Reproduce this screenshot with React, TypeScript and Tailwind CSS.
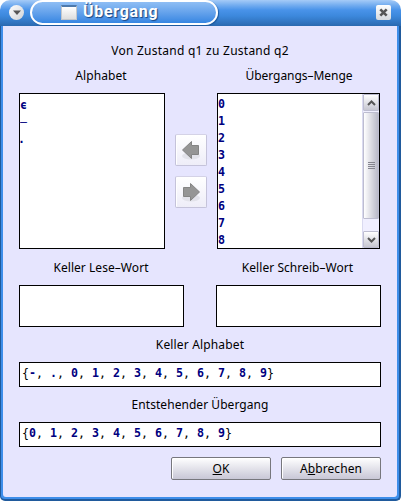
import React, { Fragment } from "react";

const digits = ["0", "1", "2", "3", "4", "5", "6", "7", "8", "9"];

function Label({ children, className = "" }: { children: React.ReactNode; className?: string }) {
  return <div className={`flex h-4 items-center justify-center whitespace-nowrap ${className}`}>{children}</div>;
}

function SetField({ items }: { items: string[] }) {
  return (
    <div className="flex h-[25px] w-[362px] items-center whitespace-pre border border-black bg-white pb-[3px] pl-[2px] font-['DejaVu_Sans_Mono',monospace] text-[11.63px]">
      <span>{"{"}</span>
      {items.map((item, i) => (
        <Fragment key={item}>
          <b className="text-[#000080]">{item}</b>
          <span>{i < items.length - 1 ? ", " : "}"}</span>
        </Fragment>
      ))}
    </div>
  );
}

function SymbolList({ items, narrow = false }: { items: string[]; narrow?: boolean }) {
  return (
    <div className={`min-w-0 flex-1 font-['DejaVu_Sans_Mono',monospace] text-[11.63px] font-bold leading-[17px] text-[#000080] ${narrow ? "pt-[3px]" : "overflow-hidden pt-[2px]"}`}>
      {items.map((item) => (
        <div key={item} className={`h-[17px] ${item === "." ? "-ml-[2px]" : item === "–" ? "font-normal" : ""}`}>{item}</div>
      ))}
    </div>
  );
}

function ArrowButton({ right = false }: { right?: boolean }) {
  return (
    <button className="flex size-8 items-center justify-center rounded-[2px] border border-[#c5c3da] border-t-[#d4d2e6] bg-linear-to-b from-white to-[#eeedf8] shadow-[inset_1px_1px_0_#fff]">
      <svg width="20" height="20" viewBox="0 0 20 20" className={right ? "-scale-x-100" : ""}>
        <ellipse cx="10" cy="16" rx="9" ry="3.5" fill="#e2e2ea" />
        <path d="M1.5 10 L10.5 1.5 V5.5 H17.5 V14.5 H10.5 V18.5 Z" fill="#959595" stroke="#848484" />
      </svg>
    </button>
  );
}

function ScrollButton({ down = false }: { down?: boolean }) {
  return (
    <div className="flex h-[17px] items-center justify-center rounded-[1px] border border-[#bdbdd0] bg-linear-to-b from-white to-[#c6c6d0]">
      <svg width="9" height="6" viewBox="0 0 9 6" className={down ? "-scale-y-100" : ""}>
        <path d="M1 5 L4.5 1.5 L8 5" fill="none" stroke="#555" strokeWidth="2" />
      </svg>
    </div>
  );
}

function Scrollbar() {
  return (
    <div className="flex w-[17px] flex-col border-l border-[#dadaf0] bg-[#f0efff]">
      <ScrollButton />
      <div className="mt-px flex h-[107px] flex-col items-center justify-center gap-px rounded-[1px] border border-[#bdbdd0] bg-linear-to-r from-white to-[#b9b9c8] pb-[1px]">
        {[0, 1, 2, 3].map((n) => (
          <div key={n} className="h-px w-[7px] bg-[#85858f]" />
        ))}
      </div>
      <div className="h-[12px]" />
      <ScrollButton down />
    </div>
  );
}

function DialogButton({ children }: { children: React.ReactNode }) {
  return (
    <button className="flex h-[23px] w-[100px] items-center justify-center rounded-[2px] border border-[#77777d] bg-linear-to-b from-white to-[#c8c7d6] shadow-[inset_1px_1px_0_#fff]">
      {children}
    </button>
  );
}

function TitleBar() {
  return (
    <div className="flex h-[26px] rounded-t-[10px] bg-[linear-gradient(#a5cbf7_0px,#75aef0_5px,#4993e9_10px,#3c88dc_16px,#2a69b0_26px)] pl-[9px] pr-[10px]">
      <div className="mt-[5px] flex size-[15px] items-center justify-center rounded-full bg-linear-to-br from-white to-[#cfd2d6]">
        <svg width="8" height="5" viewBox="0 0 8 5"><path d="M0 .5H8L4 5Z" fill="#555" /></svg>
      </div>
      <div className="ml-[6px] flex h-[25px] w-[188px] items-center rounded-[13px] border-2 border-white bg-linear-to-b from-[#8fbef4] to-[#3686e2] pl-[29px] shadow-[1px_1px_1px_#1d599d]">
        <div className="h-[15px] w-4 border border-[#c3c7cb] border-t-2 border-t-[#4d79ac] bg-linear-to-b from-white to-[#dedede]" />
        <span className="mb-[2px] ml-[6px] font-['Roboto',sans-serif] text-[16px] font-bold leading-none tracking-[0.7px] text-white [text-shadow:1px_1px_1px_#174580]">Übergang</span>
      </div>
      <div className="ml-auto mt-[5px] flex size-[15px] items-center justify-center rounded-[2px] bg-linear-to-b from-white to-[#d5d9dd]">
        <svg width="9" height="9" viewBox="0 0 9 9"><path d="M1.3 1.3 7.7 7.7M7.7 1.3 1.3 7.7" stroke="#555" strokeWidth="2.6" /></svg>
      </div>
    </div>
  );
}

export default function App() {
  return (
    <div className="flex h-[501px] w-[401px] flex-col bg-white font-['Noto_Sans',sans-serif] text-[12px] leading-4 text-black">
      <TitleBar />
      <div className="h-[475px] rounded-b-[5px] border-b-2 border-l border-r-2 border-[#205a9c] bg-[#3e8eea] pb-[2px] pl-[2px] pr-[2px]">
        <div className="flex h-full flex-col rounded-b-[3px] bg-[#e6e5fe] pl-4 pt-[17px]">
          <Label className="w-[362px] tracking-[0.25px]">Von Zustand q1 zu Zustand q2</Label>
          <div className="mt-[9px] flex w-[362px] justify-between">
            <Label className="w-[164px] tracking-[0.1px]">Alphabet</Label>
            <Label className="w-[164px] tracking-[-0.05px]">Übergangs–Menge</Label>
          </div>
          <div className="mt-[9px] flex h-[156px]">
            <div className="flex w-[146px] border border-black bg-white">
              <SymbolList narrow items={["ϵ", "–", "."]} />
            </div>
            <div className="ml-[10px] flex w-8 flex-col justify-center gap-[10px]">
              <ArrowButton />
              <ArrowButton right />
            </div>
            <div className="ml-[10px] flex w-[163px] border border-black bg-white">
              <SymbolList items={digits.slice(0, 9)} />
              <Scrollbar />
            </div>
          </div>
          <div className="mt-[11px] flex w-[362px] justify-between">
            <Label className="w-[164px] tracking-[0.05px]">Keller Lese–Wort</Label>
            <Label className="w-[167px] tracking-[0.05px]">Keller Schreib–Wort</Label>
          </div>
          <div className="mt-[9px] flex w-[362px] justify-between">
            <div className="h-[42px] w-[165px] border border-black bg-white" />
            <div className="h-[42px] w-[165px] border border-black bg-white" />
          </div>
          <Label className="mt-[10px] w-[362px] tracking-[0.15px]">Keller Alphabet</Label>
          <div className="mt-[9px]"><SetField items={["-", ".", ...digits]} /></div>
          <Label className="mt-[10px] w-[362px] tracking-[0.05px]">Entstehender Übergang</Label>
          <div className="mt-[9px]"><SetField items={digits} /></div>
          <div className="mt-[10px] flex w-[362px] justify-end gap-[10px]">
            <DialogButton><span><u>O</u>K</span></DialogButton>
            <DialogButton><span className="tracking-[0.1px]">A<u>b</u>brechen</span></DialogButton>
          </div>
        </div>
      </div>
    </div>
  );
}
